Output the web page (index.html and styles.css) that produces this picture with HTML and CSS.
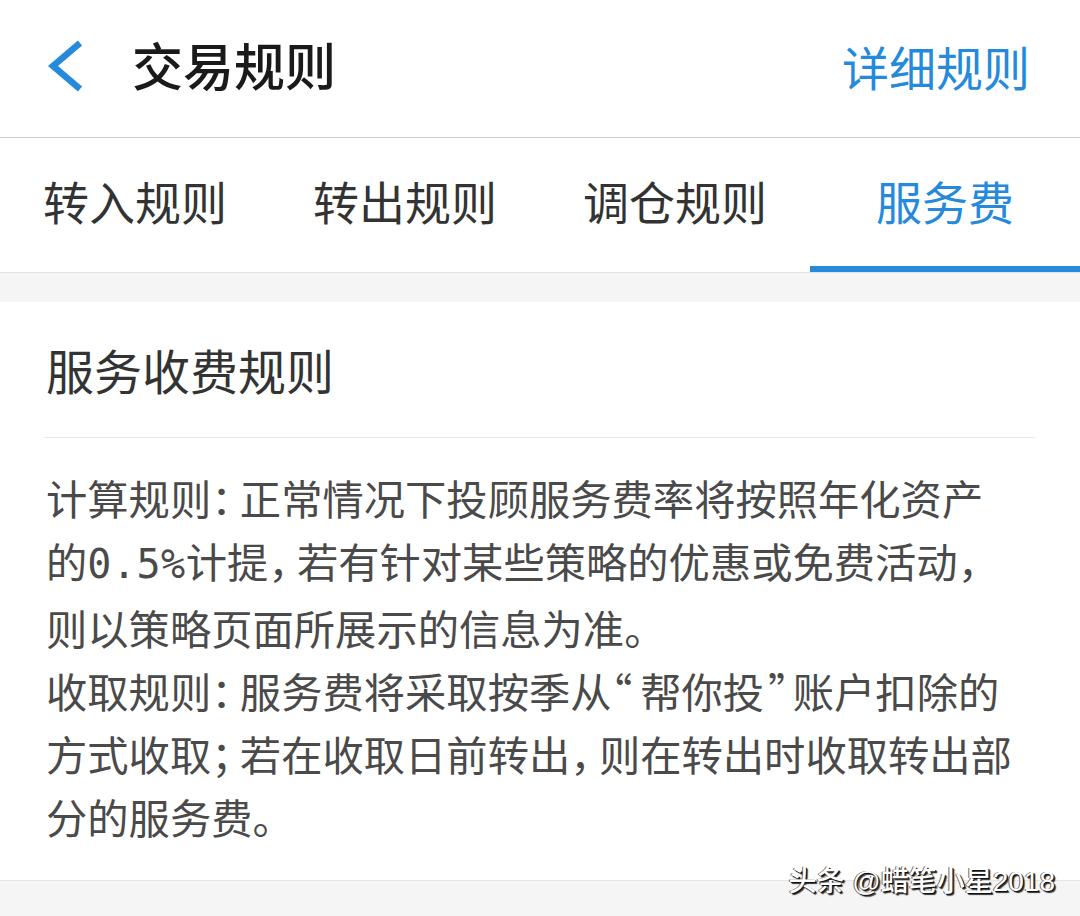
FILE: index.html
```html
<!DOCTYPE html>
<html lang="zh-CN">
<head>
<meta charset="utf-8">
<title>交易规则</title>
<link rel="stylesheet" href="styles.css">
</head>
<body>
<div class="page">
  <header class="topbar">
    <div class="topbar-left">
      <svg class="back" width="40" height="52" viewBox="0 0 40 52" aria-hidden="true">
        <polyline points="33,3 6,26 33,49" fill="none" stroke="#2589dc" stroke-width="6.5" stroke-linejoin="miter" stroke-linecap="butt"/>
      </svg>
      <h1 class="title">交易规则</h1>
    </div>
    <a class="detail-link">详细规则</a>
  </header>
  <nav class="tabs">
    <div class="tab">转入规则</div>
    <div class="tab">转出规则</div>
    <div class="tab">调仓规则</div>
    <div class="tab tab-active">服务费</div>
  </nav>
  <div class="gap"></div>
  <section class="card">
    <h2 class="card-title">服务收费规则</h2>
    <div class="card-body">
      <p>计算规则<span class="pn">：</span>正常情况下投顾服务费率将按照年化资产的<span class="num">0.5%</span>计提<span class="pn">，</span>若有针对某些策略的优惠或免费活动<span class="pn">，</span>则以策略页面所展示的信息为准。</p>
      <p>收取规则<span class="pn">：</span>服务费将采取按季从<span class="pn">“</span>帮你投<span class="pn pn-close">”</span>账户扣除的方式收取<span class="pn">；</span>若在收取日前转出<span class="pn">，</span>则在转出时收取转出部分的服务费。</p>
    </div>
  </section>
  <div class="footer-gap"></div>
  <div class="watermark">头条 @蜡笔小星2018</div>
</div>
</body>
</html>
```

FILE: styles.css
```css
* { box-sizing: border-box; }
html, body { margin: 0; padding: 0; }
body {
  width: 1080px;
  height: 916px;
  overflow: hidden;
  background: #f5f5f5;
  font-family: "Noto Sans CJK SC", "Noto Sans", sans-serif;
}
.page {
  position: relative;
  width: 1080px;
  height: 916px;
  display: flex;
  flex-direction: column;
}
.topbar {
  height: 138px;
  background: #fff;
  border-bottom: 1px solid #cfcfcf;
  display: flex;
  align-items: center;
  justify-content: space-between;
  padding: 0 50px 0 47px;
}
.topbar-left {
  display: flex;
  align-items: center;
}
.back {
  display: block;
  margin-right: 45px;
  margin-top: -6px;
}
.title {
  margin: 0;
  font-size: 51px;
  font-weight: 500;
  color: #1a1a1a;
  line-height: 1;
  margin-top: -8px;
}
.detail-link {
  font-size: 47px;
  color: #2589dc;
  line-height: 1;
  margin-top: -6px;
}
.tabs {
  height: 135px;
  background: #fff;
  border-bottom: 1px solid #e2e2e2;
  display: grid;
  grid-template-columns: repeat(4, 1fr);
}
.tab {
  display: flex;
  align-items: center;
  justify-content: center;
  font-size: 46px;
  color: #333;
  line-height: 1;
  padding-bottom: 4px;
  border-bottom: 6px solid transparent;
}
.tab-active {
  color: #2589dc;
  border-bottom-color: #2589dc;
}
.gap {
  height: 29px;
}
.card {
  background: #fff;
  padding: 0 45px 0 44px;
  border-bottom: 1px solid #e6e6e6;
}
.card-title {
  margin: 0;
  height: 136px;
  display: flex;
  align-items: center;
  font-size: 48px;
  font-weight: 400;
  color: #333;
  line-height: 1;
  padding-left: 2px;
  padding-bottom: 2px;
  border-bottom: 1px solid #e8e8e8;
}
.card-body {
  padding: 28px 17px 32px 2px;
}
.card-body p {
  margin: 0;
  font-size: 41.3px;
  line-height: 63px;
  color: #4a4a4a;
}
.pn {
  font-feature-settings: "halt" 1;
  letter-spacing: 8px;
}
.pn-close {
  letter-spacing: 0;
  padding-left: 4px;
  padding-right: 4px;
}
.num {
  font-family: "DejaVu Sans Mono", "Liberation Mono", monospace;
  font-size: 40px;
  letter-spacing: 0.5px;
}
.footer-gap {
  flex: 1;
}
.watermark {
  position: absolute;
  right: 25px;
  bottom: 20px;
  font-family: "Liberation Sans", "Noto Sans CJK SC", sans-serif;
  font-size: 28px;
  font-weight: 500;
  color: #fff;
  line-height: 1;
  text-shadow: 1px 1px 0 #111, 2px 2px 1px #333, -1px 0 0 #666;
}
```
